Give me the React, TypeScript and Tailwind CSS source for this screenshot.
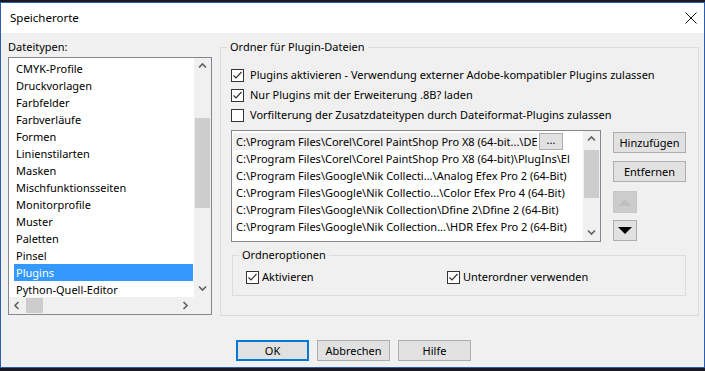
const FONT = "font-['Noto_Sans',sans-serif]";

const fileTypes = [
  'CMYK-Profile',
  'Druckvorlagen',
  'Farbfelder',
  'Farbverläufe',
  'Formen',
  'Linienstilarten',
  'Masken',
  'Mischfunktionsseiten',
  'Monitorprofile',
  'Muster',
  'Paletten',
  'Pinsel',
  'Plugins',
  'Python-Quell-Editor',
];

const paths = [
  'C:\\Program Files\\Corel\\Corel PaintShop Pro X8 (64-bit)\\PlugIns\\El',
  'C:\\Program Files\\Google\\Nik Collecti...\\Analog Efex Pro 2 (64-Bit)',
  'C:\\Program Files\\Google\\Nik Collectio...\\Color Efex Pro 4 (64-Bit)',
  'C:\\Program Files\\Google\\Nik Collection\\Dfine 2\\Dfine 2 (64-Bit)',
  'C:\\Program Files\\Google\\Nik Collection...\\HDR Efex Pro 2 (64-Bit)',
];

function Check({ checked }: { checked: boolean }) {
  return (
    <span className="flex h-[13px] w-[13px] shrink-0 items-center justify-center border border-[#333] bg-white">
      {checked && (
        <svg width="11" height="11" viewBox="0 0 11 11">
          <path d="M1.5 5.5 L4 8 L9.5 2" fill="none" stroke="#333" strokeWidth="1.2" />
        </svg>
      )}
    </span>
  );
}

function Chevron({ dir }: { dir: 'up' | 'down' | 'left' | 'right' }) {
  const d = {
    up: 'M1 5.5 L4.5 2 L8 5.5',
    down: 'M1 2.5 L4.5 6 L8 2.5',
    left: 'M5.5 1 L2 4.5 L5.5 8',
    right: 'M2.5 1 L6 4.5 L2.5 8',
  }[dir];
  return (
    <svg width="9" height="9" viewBox="0 0 9 9">
      <path d={d} fill="none" stroke="#606060" strokeWidth="1.6" />
    </svg>
  );
}

function Btn({ children }: { children: React.ReactNode }) {
  return (
    <div className="flex h-[21px] w-[73px] items-center justify-center border border-[#adadad] bg-[#e1e1e1]">
      {children}
    </div>
  );
}

export default function App() {
  return (
    <div className={`h-[371px] w-[705px] bg-[#171a24] pt-[2px] pb-[3px] text-[11px] leading-[16px] text-black ${FONT}`}>
      <div className="flex h-full flex-col border border-[#2b5fae] bg-[#f0f0f0]">
        {/* title bar */}
        <div className="flex h-[30px] items-center justify-between bg-white pl-[9px] pr-[6px]">
          <span className="text-[11.5px]">Speicherorte</span>
          <svg width="12" height="12" viewBox="0 0 12 12" className="mr-[1px]">
            <path d="M0.5 0.5 L11.5 11.5 M11.5 0.5 L0.5 11.5" stroke="#111" strokeWidth="1" />
          </svg>
        </div>

        <div className="flex pl-[7px] pt-[6px]">
          {/* left column */}
          <div className="flex w-[204px] flex-col">
            <div className="h-[16px]">Dateitypen:</div>
            <div className="mt-[2px] flex h-[258px] flex-col border border-[#828790] bg-white">
              <div className="flex h-[239px]">
                <div className="w-[185px] overflow-hidden pl-[5px] pt-[2px]">
                  {fileTypes.map((t) => (
                    <div
                      key={t}
                      className={`h-[17px] w-[179px] pl-[2px] leading-[17px] ${t === 'Plugins' ? 'bg-[#3399ff] text-white' : ''}`}
                    >
                      {t}
                    </div>
                  ))}
                </div>
                <div className="flex w-[17px] flex-col items-center bg-[#f0f0f0]">
                  <div className="flex h-[17px] items-center justify-center"><Chevron dir="up" /></div>
                  <div className="mt-[43px] h-[90px] w-[15px] bg-[#cdcdcd]" />
                  <div className="flex-1" />
                  <div className="flex h-[17px] items-center justify-center"><Chevron dir="down" /></div>
                </div>
              </div>
              <div className="flex h-[17px]">
                <div className="flex w-[185px] items-center bg-[#f0f0f0]">
                  <div className="flex w-[17px] justify-center"><Chevron dir="left" /></div>
                  <div className="h-[15px] w-[17px] bg-[#cdcdcd]" />
                  <div className="flex-1" />
                  <div className="flex w-[17px] justify-center"><Chevron dir="right" /></div>
                </div>
                <div className="w-[17px] bg-[#f0f0f0]" />
              </div>
            </div>
          </div>

          {/* right group */}
          <fieldset className="ml-[8px] h-[277px] w-[479px] border border-[#dcdcdc]">
            <legend className="ml-[6px] px-[3px]">Ordner für Plugin-Dateien</legend>
            <div className="pl-[10px]">
              <div className="mt-[10px] flex flex-col">
                {[
                  [true, 'Plugins aktivieren - Verwendung externer Adobe-kompatibler Plugins zulassen'],
                  [true, 'Nur Plugins mit der Erweiterung .8B? laden'],
                  [false, 'Vorfilterung der Zusatzdateitypen durch Dateiformat-Plugins zulassen'],
                ].map(([c, label]) => (
                  <div key={label as string} className="flex h-[20px] items-center gap-[6px]">
                    <Check checked={c as boolean} />
                    <span>{label as string}</span>
                  </div>
                ))}
              </div>

              <div className="mt-[5px] flex">
                <div className="flex h-[112px] w-[370px] border border-[#828790] bg-white">
                  <div className="w-[351px] overflow-hidden pt-[2px]">
                    <div className="flex h-[17px] items-center">
                      <div className="ml-[1px] h-[17px] w-[304px] overflow-hidden whitespace-nowrap bg-[#f0f0f0] pl-[3px] leading-[17px]">
                        C:\Program Files\Corel\Corel PaintShop Pro X8 (64-bit...\DE
                      </div>
                      <div className="ml-[2px] flex h-[17px] w-[24px] items-start justify-center border border-[#adadad] bg-[#e1e1e1] leading-[12px]">
                        ...
                      </div>
                    </div>
                    {paths.map((p) => (
                      <div key={p} className="h-[17px] whitespace-nowrap pl-[4px] leading-[17px]">
                        {p}
                      </div>
                    ))}
                  </div>
                  <div className="flex w-[17px] flex-col items-center bg-[#f0f0f0]">
                    <div className="flex h-[17px] items-center justify-center"><Chevron dir="up" /></div>
                    <div className="mt-[2px] h-[48px] w-[15px] bg-[#cdcdcd]" />
                    <div className="flex-1" />
                    <div className="flex h-[17px] items-center justify-center"><Chevron dir="down" /></div>
                  </div>
                </div>

                <div className="ml-[12px] mt-[2px] flex flex-col">
                  <Btn>Hinzufügen</Btn>
                  <div className="mt-[8px]">
                    <Btn>Entfernen</Btn>
                  </div>
                  <div className="mt-[9px] flex h-[22px] w-[24px] items-center justify-center border border-[#c6c6c6] bg-[#cccccc]">
                    <svg width="14" height="8" viewBox="0 0 14 8">
                      <path d="M0 8 L7 1 L14 8 Z" fill="#bfbfbf" />
                    </svg>
                  </div>
                  <div className="mt-[7px] flex h-[21px] w-[24px] items-center justify-center border border-[#adadad] bg-[#e1e1e1]">
                    <svg width="14" height="8" viewBox="0 0 14 8">
                      <path d="M0 0 L14 0 L7 7 Z" fill="#000" />
                    </svg>
                  </div>
                </div>
              </div>

              <fieldset className="ml-[1px] mt-[5px] h-[49px] w-[454px] border border-[#dcdcdc]">
                <legend className="ml-[6px] px-[3px]">Ordneroptionen</legend>
                <div className="mt-[6px] flex h-[16px] items-center pl-[13px]">
                  <div className="flex w-[201px] items-center gap-[3px]">
                    <Check checked />
                    <span>Aktivieren</span>
                  </div>
                  <div className="flex items-center gap-[3px]">
                    <Check checked />
                    <span>Unterordner verwenden</span>
                  </div>
                </div>
              </fieldset>
            </div>
          </fieldset>
        </div>

        {/* bottom buttons */}
        <div className="ml-[235px] mt-[24px] flex gap-[8px]">
          <div className="flex h-[21px] w-[73px] items-center justify-center border-2 border-[#0078d7] bg-[#e1e1e1]">OK</div>
          <Btn>Abbrechen</Btn>
          <Btn>Hilfe</Btn>
        </div>
      </div>
    </div>
  );
}
